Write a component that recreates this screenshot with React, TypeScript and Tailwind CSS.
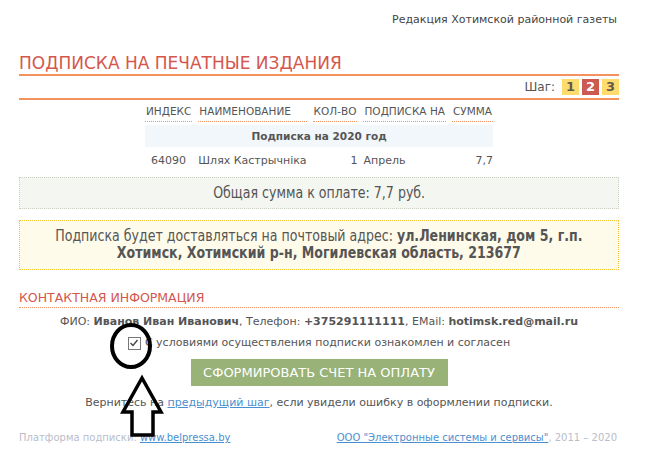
import React from 'react';

const body = { fontFamily: '"DejaVu Sans", Verdana, sans-serif' };

const rows = [
  { index: '64090', name: 'Шлях Кастрычнiка', qty: 1, month: 'Апрель', sum: '7,7' },
];

const StepBox: React.FC<{ n: number; active?: boolean }> = ({ n, active }) => (
  <span
    className={`inline-flex h-[16px] w-[17px] items-center justify-center text-[13px] font-bold ${
      active ? 'bg-[#cd5a50] text-white' : 'bg-[#fedb6b] text-[#5f5a4c]'
    }`}
  >
    {n}
  </span>
);

// Пометки поверх страницы: кружок вокруг чекбокса и стрелка
const Annotation: React.FC = () => (
  <svg className="pointer-events-none absolute left-0 top-0" width="647" height="460">
    <ellipse cx="131" cy="346" rx="19" ry="21" fill="none" stroke="#000" strokeWidth="4" />
    <path
      d="M142 378 L161 412 L153 412 L153 435 L132 435 L132 412 L123 412 Z"
      fill="none"
      stroke="#000"
      strokeWidth="3.5"
      strokeLinejoin="miter"
    />
  </svg>
);

export default function App() {
  return (
    <div className="relative h-[460px] w-[647px] overflow-hidden bg-white text-[#555]" style={body}>
      <div className="pl-[19px] pr-[28px]">
        <div className="pr-[2px] pt-[13px] text-right text-[11px] leading-[13px] text-[#444]">
          Редакция Хотимской районной газеты
        </div>

        <h1 className="mt-[27px] text-[17px] leading-[20px] text-[#d3574c]">ПОДПИСКА НА ПЕЧАТНЫЕ ИЗДАНИЯ</h1>
        <div className="mt-[1px] flex h-[26px] items-center justify-end gap-[3px] border-y-[2px] border-[#f3915f] text-[12px] text-[#555]">
          <span className="mr-[4px]">Шаг:</span>
          <StepBox n={1} />
          <StepBox n={2} active />
          <StepBox n={3} />
        </div>

        <table className="mx-auto mt-[1px] border-separate border-spacing-x-[6px] border-spacing-y-[3px] text-[11px] leading-[14px]">
          <thead>
            <tr className="text-[10.5px] text-[#555]">
              {['ИНДЕКС', 'НАИМЕНОВАНИЕ', 'КОЛ-ВО', 'ПОДПИСКА НА', 'СУММА'].map((h) => (
                <th key={h} className="border-b border-dotted border-[#f3915f] px-[1px] pb-[3px] text-left font-normal">
                  {h}
                </th>
              ))}
            </tr>
          </thead>
          <tbody>
            <tr>
              <td colSpan={5} className="bg-[#f2f7fb] py-[4px] text-center text-[10.5px] font-bold text-[#555]">
                Подписка на 2020 год
              </td>
            </tr>
            {rows.map((r) => (
              <tr key={r.index}>
                <td className="py-[4px] pl-[6px]">{r.index}</td>
                <td className="py-[4px]">{r.name}</td>
                <td className="py-[4px] text-right">{r.qty}</td>
                <td className="py-[4px]">{r.month}</td>
                <td className="py-[4px] text-right">{r.sum}</td>
              </tr>
            ))}
          </tbody>
        </table>

        <div className="mt-[2px] flex h-[32px] items-center justify-center border border-dotted border-[#c9d1c0] bg-[#f4f7f1] text-[15px] text-[#555]">
          <span className="inline-block scale-x-[0.84] whitespace-nowrap">Общая сумма к оплате: 7,7 руб.</span>
        </div>

        <div className="mt-[11px] flex justify-center border border-dotted border-[#f5c433] bg-[#fffbea] py-[7px] text-center text-[15px] leading-[17px] text-[#555]">
          <span className="inline-block shrink-0 scale-x-[0.84] whitespace-nowrap">
            Подписка будет доставляться на почтовый адрес: <b>ул.Ленинская, дом 5, г.п.</b>
            <br />
            <b>Хотимск, Хотимский р-н, Могилевская область, 213677</b>
          </span>
        </div>

        <h2 className="mt-[20px] border-b border-dotted border-[#f3915f] pb-[1px] text-[12.5px] leading-[16px] text-[#d3574c]">
          КОНТАКТНАЯ ИНФОРМАЦИЯ
        </h2>

        <div className="mt-[7px] text-center text-[11px] leading-[14px] text-[#555]">
          ФИО: <b>Иванов Иван Иванович</b>, Телефон: <b>+375291111111</b>, EMail: <b>hotimsk.red@mail.ru</b>
        </div>

        <label className="mt-[7px] flex items-center justify-center gap-[4px] text-[11px] leading-[14px] text-[#555]">
          <span className="inline-flex h-[13px] w-[13px] items-center justify-center border border-[#777] bg-white">
            <svg width="10" height="10" viewBox="0 0 10 10">
              <path d="M1.5 5 L4 7.5 L8.5 2" fill="none" stroke="#444" strokeWidth="1.4" />
            </svg>
          </span>
          С условиями осуществления подписки ознакомлен и согласен
        </label>

        <div className="mt-[9px] flex justify-center">
          <button className="h-[27px] w-[257px] whitespace-nowrap bg-[#98b277] text-[13px] text-white">
            СФОРМИРОВАТЬ СЧЕТ НА ОПЛАТУ
          </button>
        </div>

        <div className="mt-[10px] text-center text-[11px] leading-[14px] text-[#555]">
          Вернитесь на <a className="text-[#4a90d0] underline">предыдущий шаг</a>, если увидели ошибку в оформлении подписки.
        </div>

        <div className="mt-[21px] flex justify-between pr-[2px] text-[10px] leading-[13px] text-[#b9bdc9]">
          <span>
            Платформа подписки: <a className="text-[#4a90d0] underline">www.belpressa.by</a>
          </span>
          <span>
            <a className="text-[#4a90d0] underline">ООО "Электронные системы и сервисы"</a>, 2011 – 2020
          </span>
        </div>
      </div>
      <Annotation />
    </div>
  );
}
